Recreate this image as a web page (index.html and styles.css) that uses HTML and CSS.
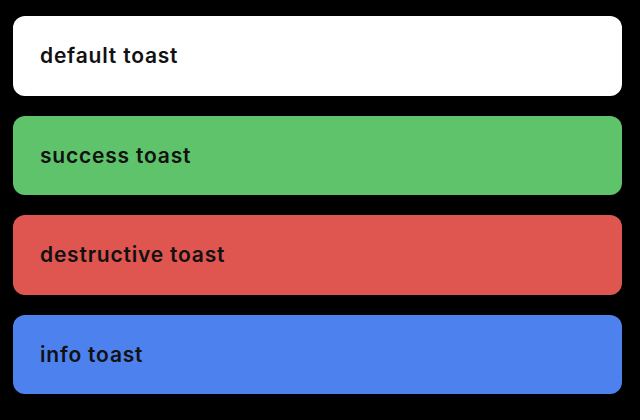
FILE: index.html
```html
<!DOCTYPE html>
<html lang="en">
<head>
  <meta charset="UTF-8" />
  <meta name="viewport" content="width=device-width, initial-scale=1" />
  <title>Toasts</title>
  <link rel="stylesheet" href="styles.css">
</head>
<body>
  <div class="toasts">
    <div class="toast toast-default">default toast</div>
    <div class="toast toast-success">success toast</div>
    <div class="toast toast-destructive">destructive toast</div>
    <div class="toast toast-info">info toast</div>
  </div>
</body>
</html>
```

FILE: styles.css
```css
body {
  margin: 0;
  background: #000;
  font-family: 'Inter', 'Noto Sans', sans-serif;
}

.toasts {
  display: flex;
  flex-direction: column;
  gap: 20px;
  padding: 16px 18px 0 13px;
}

.toast {
  height: 79.5px;
  box-sizing: border-box;
  display: flex;
  align-items: center;
  padding: 0 27px;
  border-radius: 12px;
  font-size: 21px;
  font-weight: 600;
  letter-spacing: 0.8px;
  color: #111;
}

.toast-default {
  background: #fff;
}

.toast-success {
  background: #5ec36b;
}

.toast-destructive {
  background: #df5550;
}

.toast-info {
  background: #4d82ee;
}
```
